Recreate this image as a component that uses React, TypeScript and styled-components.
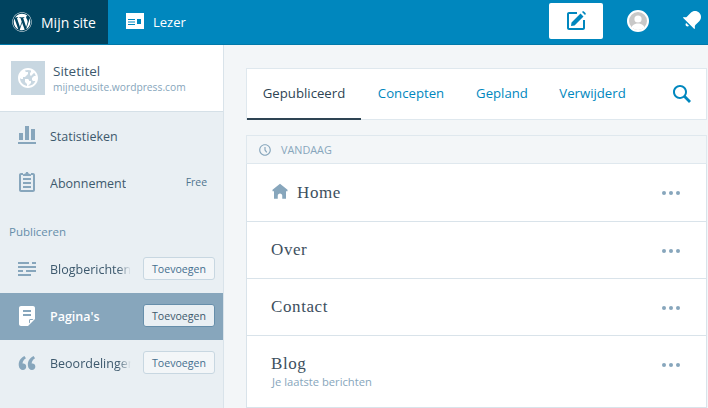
import React from "react";
import styled, { createGlobalStyle } from "styled-components";
import { FaWordpress } from "react-icons/fa";

const Global = createGlobalStyle`
  html, body { margin: 0; padding: 0; height: 100%; overflow: hidden; }
  body { font-family: "Open Sans", "Liberation Sans", sans-serif; background: #f3f6f8; }
  #root { height: 100%; }
  * { box-sizing: border-box; }
`;

const Shell = styled.div`
  width: 708px; height: 408px; display: flex; flex-direction: column; overflow: hidden;
`;
const Masterbar = styled.header`
  height: 45px; flex: none; display: flex; align-items: stretch; background: #0087be; border-bottom: 1px solid #0079aa;
`;
const BarItem = styled.div<{ $active?: boolean; $w: number; $pad: number; $gap: number; $fs: number }>`
  width: ${p => p.$w}px; padding-left: ${p => p.$pad}px; display: flex; align-items: center; gap: ${p => p.$gap}px;
  color: #fff; font-size: ${p => p.$fs}px; background: ${p => (p.$active ? "#00435f" : "transparent")};
`;
const BarSpacer = styled.div`flex: 1;`;
const Compose = styled.div`
  width: 54px; height: 36px; margin: 3px 24px 0 0; background: #fff; border-radius: 2px; color: #0087be;
  display: flex; align-items: center; justify-content: center;
`;
const Avatar = styled.div`
  width: 22px; height: 22px; margin: 10px 31px 0 0; border-radius: 50%; background: #c8c8c8; border: 2px solid #fff; overflow: hidden;
  display: flex; color: #fff;
`;
const BellWrap = styled.div`
  width: 28px; padding-top: 8px; color: #fff;
`;
const Body = styled.div`flex: 1; display: flex; min-height: 0;`;
const Sidebar = styled.aside`
  width: 224px; flex: none; background: #e9eff3; border-right: 1px solid #d9e3ea; display: flex; flex-direction: column;
`;
const SiteRow = styled.div`
  height: 67px; flex: none; background: #fff; border-bottom: 1px solid #d5e0e7; padding: 16px 0 0 11px; display: flex; gap: 8px; align-items: flex-start;
`;
const SiteIcon = styled.div`
  width: 34px; height: 34px; background: #c8d7e1; color: #fff; display: flex; align-items: center; justify-content: center;
`;
const SiteText = styled.div`display: flex; flex-direction: column;`;
const SiteTitle = styled.span`font-size: 13.5px; line-height: 18px; color: #3d596d; margin-top: 1px;`;
const SiteUrl = styled.span`font-size: 10.25px; line-height: 15px; color: #87a6bc;`;
const NavRow = styled.div<{ $selected?: boolean }>`
  height: 47px; flex: none; display: flex; align-items: center; position: relative; padding-left: 15px;
  background: ${p => (p.$selected ? "#87a6bc" : "transparent")};
`;
const NavIcon = styled.div<{ $color?: string }>`
  width: 24px; height: 24px; flex: none; margin: -2px 11px 0 0; color: ${p => p.$color ?? "#87a6bc"}; display: flex;
`;
const NavLabel = styled.span<{ $selected?: boolean; $fade?: boolean; $low?: boolean }>`
  font-size: 12.5px; white-space: nowrap; overflow: hidden; width: ${p => (p.$fade ? "81px" : "auto")};
  margin-top: ${p => (p.$low ? 2 : 0)}px;
  color: ${p => (p.$selected ? "#fff" : "#3d596d")}; font-weight: ${p => (p.$selected ? 600 : 400)};
  ${p => p.$fade && "mask-image: linear-gradient(to right, #000 84%, transparent 100%);"}
`;
const Free = styled.span`
  margin-left: auto; margin-right: 16px; font-size: 10.4px; color: #4f748e; position: relative; top: -1px;
`;
const AddBtn = styled.button<{ $selected?: boolean }>`
  position: absolute; right: 8px; top: 11px; width: 72px; height: 23px; padding: 0; font-family: inherit; font-size: 10.6px; border-radius: 3px;
  background: ${p => (p.$selected ? "#e9eff3" : "#f3f6f8")};
  border: 1px solid ${p => (p.$selected ? "#668eaa" : "#c8d7e1")};
  color: ${p => (p.$selected ? "#3d596d" : "#456f8f")};
`;
const NavHeading = styled.div`
  height: 40px; flex: none; padding: 18px 0 0 9px; font-size: 11.5px; line-height: 15px; font-weight: 500; color: #668eaa;
`;
const Main = styled.main`
  flex: 1; padding: 23px 0 0 22px; display: flex; flex-direction: column; min-width: 0;
`;
const TabCard = styled.nav`
  height: 52px; flex: none; background: #fff; border: 1px solid #dfe8ee; display: flex; align-items: stretch; position: relative; margin-right: 1px;
`;
const Tab = styled.div<{ $active?: boolean; $w: number }>`
  width: ${p => p.$w}px; flex: none; display: flex; align-items: center; justify-content: center; font-size: 13.2px; padding-bottom: 2px; margin-bottom: -1px;
  color: ${p => (p.$active ? "#2e4453" : "#0087be")};
  border-bottom: 2px solid ${p => (p.$active ? "#2e4453" : "transparent")};
`;
const SearchBtn = styled.div`
  position: absolute; right: 12px; top: 13px; width: 24px; height: 24px; color: #0087be;
`;
const DayHeader = styled.div`
  height: 29px; flex: none; margin: 15px 1px 0 0; background: #f3f6f8; border: 1px solid #dfe8ee;
  display: flex; align-items: center; padding-left: 11px; gap: 9px; font-size: 10.8px; color: #87a6bc;
`;
const ClockWrap = styled.div`width: 14px; height: 14px; display: flex; color: #87a6bc;`;
const PageRow = styled.div<{ $h?: number; $tall?: boolean }>`
  height: ${p => p.$h ?? 57}px; flex: none; margin-right: 1px; background: #fff; border: 1px solid #d9e3ea; border-top: 0; position: relative;
  padding: 0 0 ${p => (p.$tall ? 1 : 0)}px 24px; display: flex; flex-direction: column; justify-content: center;
`;
const TitleLine = styled.div`display: flex; align-items: center; gap: 8px;`;
const HomeIcon = styled.div`width: 18px; height: 18px; color: #87a6bc; display: flex; margin-top: -2px;`;
const PageTitle = styled.span`
  font-family: "Liberation Serif", serif; font-size: 17px; line-height: 22px; color: #3d4f5e; letter-spacing: 0.6px;
`;
const PageSub = styled.span`font-size: 11.2px; line-height: 14px; color: #87a6bc; margin-left: 1px;`;
const Dots = styled.div`
  position: absolute; right: 26px; top: 27px; display: flex; gap: 3px;
`;
const Dot = styled.i`width: 4px; height: 4px; border-radius: 50%; background: #87a6bc; display: block;`;

const Ico: React.FC<{ d: string; size?: number }> = ({ d, size = 24 }) => (
  <svg width={size} height={size} viewBox="0 0 24 24" fill="currentColor" fillRule="evenodd"><path d={d} /></svg>
);

const P = {
  stats: "M21 21H3v-2h18v2zM8 10H4v7h4v-7zm6-7h-4v14h4V3zm6 3h-4v11h4V6z",
  clipboard: "M16 18H8v-2h8v2zm0-6H8v2h8v-2zm2-9h-2v2h2v15H6V5h2V3H6c-1.105 0-2 .895-2 2v15c0 1.105.895 2 2 2h12c1.105 0 2-.895 2-2V5c0-1.105-.895-2-2-2zm-2 5H8v2h8V8zm-1-4c-1.105 0-2-.895-2-2h-2c0 1.105-.895 2-2 2-.552 0-1 .448-1 1v1h8V5c0-.552-.448-1-1-1z",
  posts: "M16 19H3v-2h13v2zm5-10H3v2h18V9zM3 5v2h11V5H3zm14 0v2h4V5h-4zm-6 8v2h10v-2H11zm-8 0v2h5v-2H3z",
  pagesSolid: "M6 2h12c1.105 0 2 .895 2 2v11l-7 7H6c-1.105 0-2-.895-2-2V4c0-1.105.895-2 2-2zM8 6v2h8V6H8zm0 4v2h8v-2H8zM14 19.500v-3c0-.8.7-1.500 1.500-1.500h3l-1 1h-2c-.3 0-.5.200-.5.500v2l-1 1z",
  quote: "M11.192 15.757c0-.88-.23-1.618-.69-2.217-.326-.412-.768-.683-1.327-.812-.55-.128-1.07-.137-1.54-.028-.16-.95.1-1.956.76-3.022.66-1.065 1.515-1.867 2.558-2.403L9.373 5c-.8.396-1.56.898-2.26 1.505-.71.607-1.34 1.305-1.9 2.094s-.98 1.68-1.25 2.69-.346 2.04-.217 3.1c.168 1.4.62 2.52 1.356 3.35.735.84 1.652 1.26 2.748 1.26.965 0 1.766-.29 2.4-.878.628-.576.94-1.365.94-2.368l.002.003zm9.124 0c0-.88-.23-1.618-.69-2.217-.326-.42-.77-.692-1.327-.817-.56-.124-1.074-.13-1.54-.022-.16-.94.09-1.95.75-3.02.66-1.06 1.514-1.86 2.557-2.4L18.49 5c-.8.396-1.555.898-2.26 1.505-.708.607-1.34 1.305-1.894 2.094-.556.79-.97 1.68-1.24 2.69-.273 1-.345 2.04-.217 3.1.165 1.4.615 2.52 1.35 3.35.732.833 1.646 1.25 2.742 1.25.967 0 1.768-.29 2.402-.876.627-.576.942-1.365.942-2.368v.01z",
  house: "M22 9L12 1 2 9v2h2v10h5v-4c0-1.657 1.343-3 3-3s3 1.343 3 3v4h5V11h2V9z",
  search: "M21 19l-5.154-5.154C16.574 12.742 17 11.42 17 10c0-3.866-3.134-7-7-7s-7 3.134-7 7 3.134 7 7 7c1.420 0 2.742-.426 3.846-1.154L19 21l2-2zM5 10c0-2.757 2.243-5 5-5s5 2.243 5 5-2.243 5-5 5-5-2.243-5-5z",
  time: "M12 4c4.41 0 8 3.59 8 8s-3.59 8-8 8-8-3.59-8-8 3.59-8 8-8m0-2C6.477 2 2 6.477 2 12s4.477 10 10 10 10-4.477 10-10S17.523 2 12 2zm3.8 13.4L13 11.667V7h-2v5.333l3.2 4.266 1.6-1.2z",
  reader: "M3 3h18v16H3V3zm2 6v1h7V9H5zm0 2.500v1h7v-1H5zm0 2.500v1h7v-1H5zm9-5v5h4V9h-4z",
  compose: "M13 3H5c-1.105 0-2 .895-2 2v14c0 1.105.895 2 2 2h14c1.105 0 2-.895 2-2v-8h-2v8H5V5h8V3zM16.500 4.500l3 3-9 9L7 17l.5-3.500 9-9zM18 3l3 3 .5-.5c.4-.4.4-1 0-1.400l-1.600-1.600c-.4-.4-1-.4-1.400 0L18 3z",
  bell: "M6.14 14.97l2.828 2.827c-.362.362-.862.586-1.414.586-1.105 0-2-.895-2-2 0-.552.224-1.052.586-1.414zm8.867 5.324L14.3 21 3 9.7l.706-.707 1.102.157c.754.108 1.69-.122 2.077-.51l3.885-3.884c2.34-2.34 6.135-2.34 8.475 0s2.34 6.135 0 8.475l-3.885 3.886c-.388.388-.618 1.32-.51 2.078l.157 1.1z",
  globe: "M12 2C6.477 2 2 6.477 2 12s4.477 10 10 10 10-4.477 10-10S17.523 2 12 2zm0 18l2-2 1-1v-2h-2v-1l-1-1H9v3l2 2v1.930c-3.940-.494-7-3.858-7-7.930l1 1h2v-2h2l3-3V6h-2L9 5v-.41C9.927 4.210 10.940 4 12 4s2.073.212 3 .59V6l-1 1v2l1 1 3.130-3.130c.752.897 1.304 1.964 1.606 3.130H18l-2 2v2l1 1h2l.286.286C18.030 18.060 15.240 20 12 20z",
};

const rowDots = (
  <Dots><Dot /><Dot /><Dot /></Dots>
);

const App: React.FC = () => (
  <Shell>
    <Global />
    <Masterbar>
      <BarItem $active $w={108} $pad={12} $gap={9} $fs={14}><FaWordpress size={20} /><span>Mijn site</span></BarItem>
      <BarItem $w={100} $pad={15} $gap={6} $fs={13}><Ico d={P.reader} /><span>Lezer</span></BarItem>
      <BarSpacer />
      <Compose><Ico d={P.compose} /></Compose>
      <Avatar>
        <svg width="18" height="18" viewBox="0 0 18 18" fill="currentColor"><circle cx="9" cy="7" r="3.6" /><path d="M2 18c0-4.200 3-6.500 7-6.500s7 2.300 7 6.500z" /></svg>
      </Avatar>
      <BellWrap><Ico d={P.bell} /></BellWrap>
    </Masterbar>
    <Body>
      <Sidebar>
        <SiteRow>
          <SiteIcon><Ico d={P.globe} /></SiteIcon>
          <SiteText>
            <SiteTitle>Sitetitel</SiteTitle>
            <SiteUrl>mijnedusite.wordpress.com</SiteUrl>
          </SiteText>
        </SiteRow>
        <NavRow><NavIcon><Ico d={P.stats} /></NavIcon><NavLabel $low>Statistieken</NavLabel></NavRow>
        <NavRow><NavIcon><Ico d={P.clipboard} /></NavIcon><NavLabel $low>Abonnement</NavLabel><Free>Free</Free></NavRow>
        <NavHeading>Publiceren</NavHeading>
        <NavRow><NavIcon><Ico d={P.posts} /></NavIcon><NavLabel $fade>Blogberichten</NavLabel><AddBtn>Toevoegen</AddBtn></NavRow>
        <NavRow $selected><NavIcon $color="#fff"><Ico d={P.pagesSolid} /></NavIcon><NavLabel $selected>Pagina's</NavLabel><AddBtn $selected>Toevoegen</AddBtn></NavRow>
        <NavRow><NavIcon><Ico d={P.quote} /></NavIcon><NavLabel $fade>Beoordelingen</NavLabel><AddBtn>Toevoegen</AddBtn></NavRow>
      </Sidebar>
      <Main>
        <TabCard>
          <Tab $active $w={114}>Gepubliceerd</Tab>
          <Tab $w={100}>Concepten</Tab>
          <Tab $w={82}>Gepland</Tab>
          <Tab $w={99}>Verwijderd</Tab>
          <SearchBtn><Ico d={P.search} /></SearchBtn>
        </TabCard>
        <DayHeader><ClockWrap><Ico d={P.time} size={14} /></ClockWrap><span>VANDAAG</span></DayHeader>
        <PageRow $h={58}>
          <TitleLine><HomeIcon><Ico d={P.house} size={18} /></HomeIcon><PageTitle>Home</PageTitle></TitleLine>
          {rowDots}
        </PageRow>
        <PageRow><TitleLine><PageTitle>Over</PageTitle></TitleLine>{rowDots}</PageRow>
        <PageRow><TitleLine><PageTitle>Contact</PageTitle></TitleLine>{rowDots}</PageRow>
        <PageRow $h={72} $tall>
          <TitleLine><PageTitle>Blog</PageTitle></TitleLine>
          <PageSub>Je laatste berichten</PageSub>
          {rowDots}
        </PageRow>
      </Main>
    </Body>
  </Shell>
);

export default App;
